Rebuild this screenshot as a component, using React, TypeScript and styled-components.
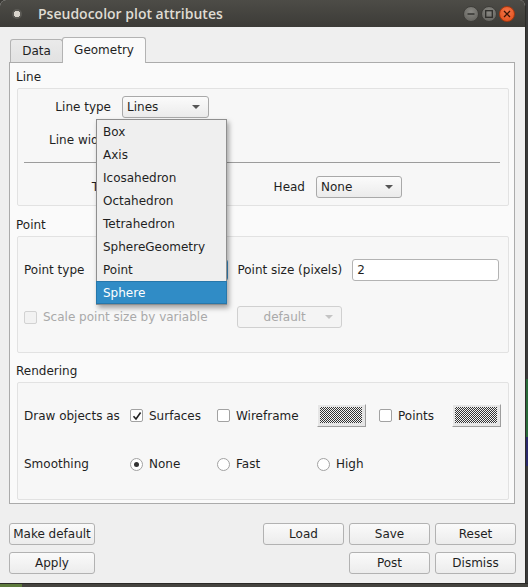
import React from "react";
import styled, { createGlobalStyle } from "styled-components";

const GlobalStyle = createGlobalStyle`
  html, body {
    margin: 0;
    padding: 0;
    background: #3b3a36;
  }
  body {
    font-family: "DejaVu Sans", "Liberation Sans", sans-serif;
    font-size: 12px;
    color: #1f1f1f;
  }
  * {
    box-sizing: border-box;
  }
`;

const Screen = styled.div`
  width: 528px;
  height: 587px;
  display: flex;
  flex-direction: column;
  background: #3b3a36;
  overflow: hidden;
`;

const WindowRow = styled.div`
  display: flex;
  height: 583px;
`;

const DesktopEdge = styled.div`
  flex: 1;
  background: linear-gradient(#3a3a3a 0 65%, #2a6a3a 65% 75%, #2a2a6a 75% 80%, #3a3a3a 80%);
`;

const DesktopBottom = styled.div`
  flex: 1;
  display: flex;
  background: #45443f;
  border-top: 1px solid #2a2926;
`;

const DesktopGreen = styled.div`
  width: 22px;
  background: #5d7a3c;
`;

const Window = styled.div`
  width: 526px;
  height: 583px;
  display: flex;
  flex-direction: column;
  background: #efefef;
  border-right: 1px solid #2c2b28;
  border-radius: 6px 6px 0 0;
  overflow: hidden;
  position: relative;
`;

const TitleBar = styled.div`
  height: 27px;
  flex-shrink: 0;
  display: flex;
  align-items: center;
  padding: 0 10px 0 12px;
  background: linear-gradient(#4d4c47, #3c3b37);
`;

const TitleDot = styled.div`
  width: 10px;
  height: 10px;
  border-radius: 50%;
  background: radial-gradient(circle at 50% 50%, #d8d4cc 0 3px, #5a5954 3.5px);
`;

const TitleText = styled.div`
  margin-left: 16px;
  font-family: "Open Sans", "DejaVu Sans", sans-serif;
  font-weight: 600;
  font-size: 14px;
  color: #dfdbd2;
`;

const WinButtons = styled.div`
  margin-left: auto;
  display: flex;
  gap: 2px;
`;

const WinButton = styled.div<{ $close?: boolean }>`
  width: 16px;
  height: 16px;
  border-radius: 50%;
  display: flex;
  align-items: center;
  justify-content: center;
  background: ${(p) =>
    p.$close
      ? "radial-gradient(circle at 50% 35%, #f4764a, #df4b16)"
      : "radial-gradient(circle at 50% 35%, #8a8984, #5d5c57)"};
  border: 1px solid ${(p) => (p.$close ? "#a8380f" : "#3f3e3a")};
`;

const Body = styled.div`
  flex: 1;
  display: flex;
  flex-direction: column;
  padding: 10px 9px 0 9px;
`;

const TabBar = styled.div`
  height: 26px;
  display: flex;
  align-items: flex-end;
  padding-left: 1px;
  margin-bottom: -1px;
  position: relative;
  z-index: 1;
`;

const Tab = styled.div<{ $active?: boolean; $w: number }>`
  width: ${(p) => p.$w}px;
  height: ${(p) => (p.$active ? 26 : 23)}px;
  margin-bottom: ${(p) => (p.$active ? 0 : 1)}px;
  display: flex;
  align-items: center;
  justify-content: center;
  padding-bottom: ${(p) => (p.$active ? 2 : 0)}px;
  border: 1px solid #b3b3b3;
  border-bottom: none;
  border-radius: 3px 3px 0 0;
  background: ${(p) => (p.$active ? "#fafafa" : "linear-gradient(#eaeaea, #e2e2e2)")};
  margin-left: ${(p) => (p.$active ? -1 : 0)}px;
`;

const Pane = styled.div`
  height: 442px;
  margin-right: 1px;
  border: 1px solid #ababab;
  background: #fafafa;
  padding: 0 5px 0 7px;
  display: flex;
  flex-direction: column;
`;

const SectionTitle = styled.div<{ $h: number }>`
  height: ${(p) => p.$h}px;
  display: flex;
  align-items: flex-end;
  padding-bottom: 4px;
  margin-left: -1px;
  line-height: 14px;
`;

const GroupBox = styled.div<{ $pt: number; $pb: number }>`
  border: 1px solid #e2e2e2;
  border-radius: 2px;
  background: #f7f7f7;
  padding: ${(p) => p.$pt}px 8px ${(p) => p.$pb}px 0;
  display: flex;
  flex-direction: column;
`;

const FormRow = styled.div<{ $h: number; $mt?: number }>`
  height: ${(p) => p.$h}px;
  margin-top: ${(p) => p.$mt ?? 0}px;
  display: flex;
  align-items: center;
`;

const FormLabel = styled.div<{ $w: number; $gap?: number }>`
  width: ${(p) => p.$w}px;
  margin-right: ${(p) => p.$gap ?? 11}px;
  text-align: right;
  white-space: nowrap;
`;

const PlainLabel = styled.div<{ $ml?: number; $mr?: number; $muted?: boolean }>`
  margin-left: ${(p) => p.$ml ?? 0}px;
  margin-right: ${(p) => p.$mr ?? 0}px;
  white-space: nowrap;
  color: ${(p) => (p.$muted ? "#a9a9a9" : "inherit")};
`;

const Separator = styled.div`
  height: 1px;
  margin: 11px 0 0 6px;
  background: #9c9c9c;
`;

const ComboBox = styled.div<{ $w: number; $ml?: number; $disabled?: boolean; $focus?: boolean }>`
  width: ${(p) => p.$w}px;
  height: 22px;
  margin-left: ${(p) => p.$ml ?? 0}px;
  flex-shrink: 0;
  display: flex;
  align-items: center;
  padding-left: ${(p) => (p.$disabled ? 26 : 4)}px;
  border: 1px solid ${(p) => (p.$focus ? "#3a8fc9" : p.$disabled ? "#d0d0d0" : "#a9a9a9")};
  border-radius: 3px;
  background: ${(p) => (p.$disabled ? "#f4f4f4" : "linear-gradient(#fbfbfb, #ebebeb)")};
  color: ${(p) => (p.$disabled ? "#a9a9a9" : "inherit")};
`;

const Arrow = styled.span<{ $disabled?: boolean }>`
  margin-left: auto;
  margin-right: 8px;
  width: 0;
  height: 0;
  border-left: 4px solid transparent;
  border-right: 4px solid transparent;
  border-top: 4px solid ${(p) => (p.$disabled ? "#c4c4c4" : "#555")};
`;

const LineSample = styled.span`
  width: 50px;
  height: 1px;
  background: #222;
`;

const LineEdit = styled.div<{ $w: number }>`
  width: ${(p) => p.$w}px;
  height: 22px;
  display: flex;
  align-items: center;
  padding-left: 4px;
  border: 1px solid #b3b3b3;
  border-radius: 3px;
  background: #fff;
`;

const Box13 = styled.span<{ $round?: boolean; $disabled?: boolean }>`
  width: 13px;
  height: 13px;
  flex-shrink: 0;
  display: flex;
  align-items: center;
  justify-content: center;
  border: 1px solid ${(p) => (p.$disabled ? "#d2d2d2" : "#a2a2a2")};
  border-radius: ${(p) => (p.$round ? "50%" : "2px")};
  background: ${(p) => (p.$disabled ? "#f2f2f2" : "#fff")};
`;

const RadioDot = styled.span`
  width: 5px;
  height: 5px;
  border-radius: 50%;
  background: #333;
`;

const Choice = styled.div<{ $ml?: number }>`
  display: flex;
  align-items: center;
  gap: 6px;
  margin-left: ${(p) => p.$ml ?? 0}px;
  white-space: nowrap;
`;

const RenderGrid = styled.div<{ $h: number; $mt?: number }>`
  height: ${(p) => p.$h}px;
  margin-top: ${(p) => p.$mt ?? 0}px;
  display: grid;
  grid-template-columns: 106px 87px 100px 62px 73px 49px;
  align-items: center;
  padding-left: 6px;
`;

const Swatch = styled.div`
  width: 49px;
  height: 23px;
  padding: 2px 3px 3px 2px;
  background: #e6e6e6;
  border-right: 1px solid #9d9d9d;
  border-bottom: 1px solid #9d9d9d;
  border-top: 1px solid #f8f8f8;
  border-left: 1px solid #f8f8f8;
`;

const Dither = styled.div`
  width: 100%;
  height: 100%;
  background: repeating-conic-gradient(#333 0 25%, #f4f4f4 0 50%) 0 0 / 2px 2px;
`;

const ButtonArea = styled.div`
  display: flex;
  flex-direction: column;
  gap: 7px;
  margin-top: 19px;
`;

const ButtonRow = styled.div`
  display: flex;
  gap: 5px;
`;

const Spacer = styled.div`
  flex: 1;
`;

const PushButton = styled.button<{ $w: number }>`
  width: ${(p) => p.$w}px;
  height: 22px;
  padding: 0;
  border: 1px solid #b2b2b2;
  border-radius: 3px;
  background: linear-gradient(#fafafa, #ececec);
  font-family: inherit;
  font-size: 12px;
  color: #1f1f1f;
`;

const Popup = styled.div`
  position: absolute;
  left: 96px;
  top: 119px;
  width: 131px;
  background: #efefef;
  border: 1px solid #8f8f8f;
  box-shadow: 2px 3px 5px rgba(0, 0, 0, 0.35);
  z-index: 5;
`;

const PopupItem = styled.div<{ $selected?: boolean }>`
  height: 23px;
  display: flex;
  align-items: center;
  padding-left: 6px;
  background: ${(p) => (p.$selected ? "#308cc6" : "transparent")};
  color: ${(p) => (p.$selected ? "#fff" : "inherit")};
  border: 1px solid ${(p) => (p.$selected ? "#2777aa" : "transparent")};
  margin: 0 -1px;
`;

const CheckMark = () => (
  <svg width="10" height="10" viewBox="0 0 10 10">
    <path d="M1.5 5.2 L4 8 L8.6 1.5" fill="none" stroke="#222" strokeWidth="1.6" />
  </svg>
);

const Check = ({ checked, disabled }: { checked?: boolean; disabled?: boolean }) => (
  <Box13 $disabled={disabled}>{checked && <CheckMark />}</Box13>
);

const Radio = ({ checked }: { checked?: boolean }) => (
  <Box13 $round>{checked && <RadioDot />}</Box13>
);

const Combo = ({
  w,
  ml,
  text,
  disabled,
  focus,
  children,
}: {
  w: number;
  ml?: number;
  text?: string;
  disabled?: boolean;
  focus?: boolean;
  children?: React.ReactNode;
}) => (
  <ComboBox $w={w} $ml={ml} $disabled={disabled} $focus={focus}>
    {text}
    {children}
    <Arrow $disabled={disabled} />
  </ComboBox>
);

// point glyph list shown in the open "Point type" combo
const glyphTypes = [
  "Box",
  "Axis",
  "Icosahedron",
  "Octahedron",
  "Tetrahedron",
  "SphereGeometry",
  "Point",
  "Sphere",
];

export default function App() {
  return (
    <>
      <GlobalStyle />
      <Screen>
        <WindowRow>
          <Window>
            <TitleBar>
              <TitleDot />
              <TitleText>Pseudocolor plot attributes</TitleText>
              <WinButtons>
                <WinButton>
                  <svg width="8" height="8" viewBox="0 0 8 8">
                    <path d="M0.5 4 H7.5" stroke="#2f2e2b" strokeWidth="1.4" />
                  </svg>
                </WinButton>
                <WinButton>
                  <svg width="8" height="8" viewBox="0 0 8 8">
                    <rect x="0.7" y="0.7" width="6.6" height="6.6" fill="none" stroke="#2f2e2b" strokeWidth="1.3" />
                  </svg>
                </WinButton>
                <WinButton $close>
                  <svg width="8" height="8" viewBox="0 0 8 8">
                    <path d="M1 1 L7 7 M7 1 L1 7" stroke="#3a1405" strokeWidth="1.3" />
                  </svg>
                </WinButton>
              </WinButtons>
            </TitleBar>

            <Body>
              <TabBar>
                <Tab $w={53}>Data</Tab>
                <Tab $w={84} $active>
                  Geometry
                </Tab>
              </TabBar>

              <Pane>
                <SectionTitle $h={25}>Line</SectionTitle>
                <GroupBox $pt={7} $pb={8}>
                  <FormRow $h={21}>
                    <FormLabel $w={93}>Line type</FormLabel>
                    <Combo w={87} text="Lines" />
                  </FormRow>
                  <FormRow $h={22} $mt={12}>
                    <FormLabel $w={93}>Line width</FormLabel>
                    <Combo w={87}>
                      <LineSample />
                    </Combo>
                  </FormRow>
                  <Separator />
                  <FormRow $h={21} $mt={13}>
                    <FormLabel $w={93}>Tail</FormLabel>
                    <Combo w={87} />
                    <FormLabel $w={96}>Head</FormLabel>
                    <Combo w={86} text="None" />
                  </FormRow>
                </GroupBox>

                <SectionTitle $h={30}>Point</SectionTitle>
                <GroupBox $pt={21} $pb={24}>
                  <FormRow $h={23}>
                    <PlainLabel $ml={6} $mr={12}>
                      Point type
                    </PlainLabel>
                    <Combo w={132} focus />
                    <PlainLabel $ml={9} $mr={10}>
                      Point size (pixels)
                    </PlainLabel>
                    <LineEdit $w={147}>2</LineEdit>
                  </FormRow>
                  <FormRow $h={22} $mt={25}>
                    <Choice $ml={6}>
                      <Check disabled />
                      <PlainLabel $muted>Scale point size by variable</PlainLabel>
                    </Choice>
                    <Combo w={105} ml={29} text="default" disabled />
                  </FormRow>
                </GroupBox>

                <SectionTitle $h={29}>Rendering</SectionTitle>
                <GroupBox $pt={21} $pb={24}>
                  <RenderGrid $h={23}>
                    <span>Draw objects as</span>
                    <Choice>
                      <Check checked />
                      Surfaces
                    </Choice>
                    <Choice>
                      <Check />
                      Wireframe
                    </Choice>
                    <Swatch>
                      <Dither />
                    </Swatch>
                    <Choice>
                      <Check />
                      Points
                    </Choice>
                    <Swatch>
                      <Dither />
                    </Swatch>
                  </RenderGrid>
                  <RenderGrid $h={22} $mt={26}>
                    <span>Smoothing</span>
                    <Choice>
                      <Radio checked />
                      None
                    </Choice>
                    <Choice>
                      <Radio />
                      Fast
                    </Choice>
                    <Choice>
                      <Radio />
                      High
                    </Choice>
                  </RenderGrid>
                </GroupBox>
              </Pane>

              <ButtonArea>
                <ButtonRow>
                  <PushButton $w={86}>Make default</PushButton>
                  <Spacer />
                  <PushButton $w={81}>Load</PushButton>
                  <PushButton $w={81}>Save</PushButton>
                  <PushButton $w={81}>Reset</PushButton>
                </ButtonRow>
                <ButtonRow>
                  <PushButton $w={86}>Apply</PushButton>
                  <Spacer />
                  <PushButton $w={81}>Post</PushButton>
                  <PushButton $w={81}>Dismiss</PushButton>
                </ButtonRow>
              </ButtonArea>
            </Body>

            <Popup>
              {glyphTypes.map((g) => (
                <PopupItem key={g} $selected={g === "Sphere"}>
                  {g}
                </PopupItem>
              ))}
            </Popup>
          </Window>
          <DesktopEdge />
        </WindowRow>
        <DesktopBottom>
          <DesktopGreen />
        </DesktopBottom>
      </Screen>
    </>
  );
}
